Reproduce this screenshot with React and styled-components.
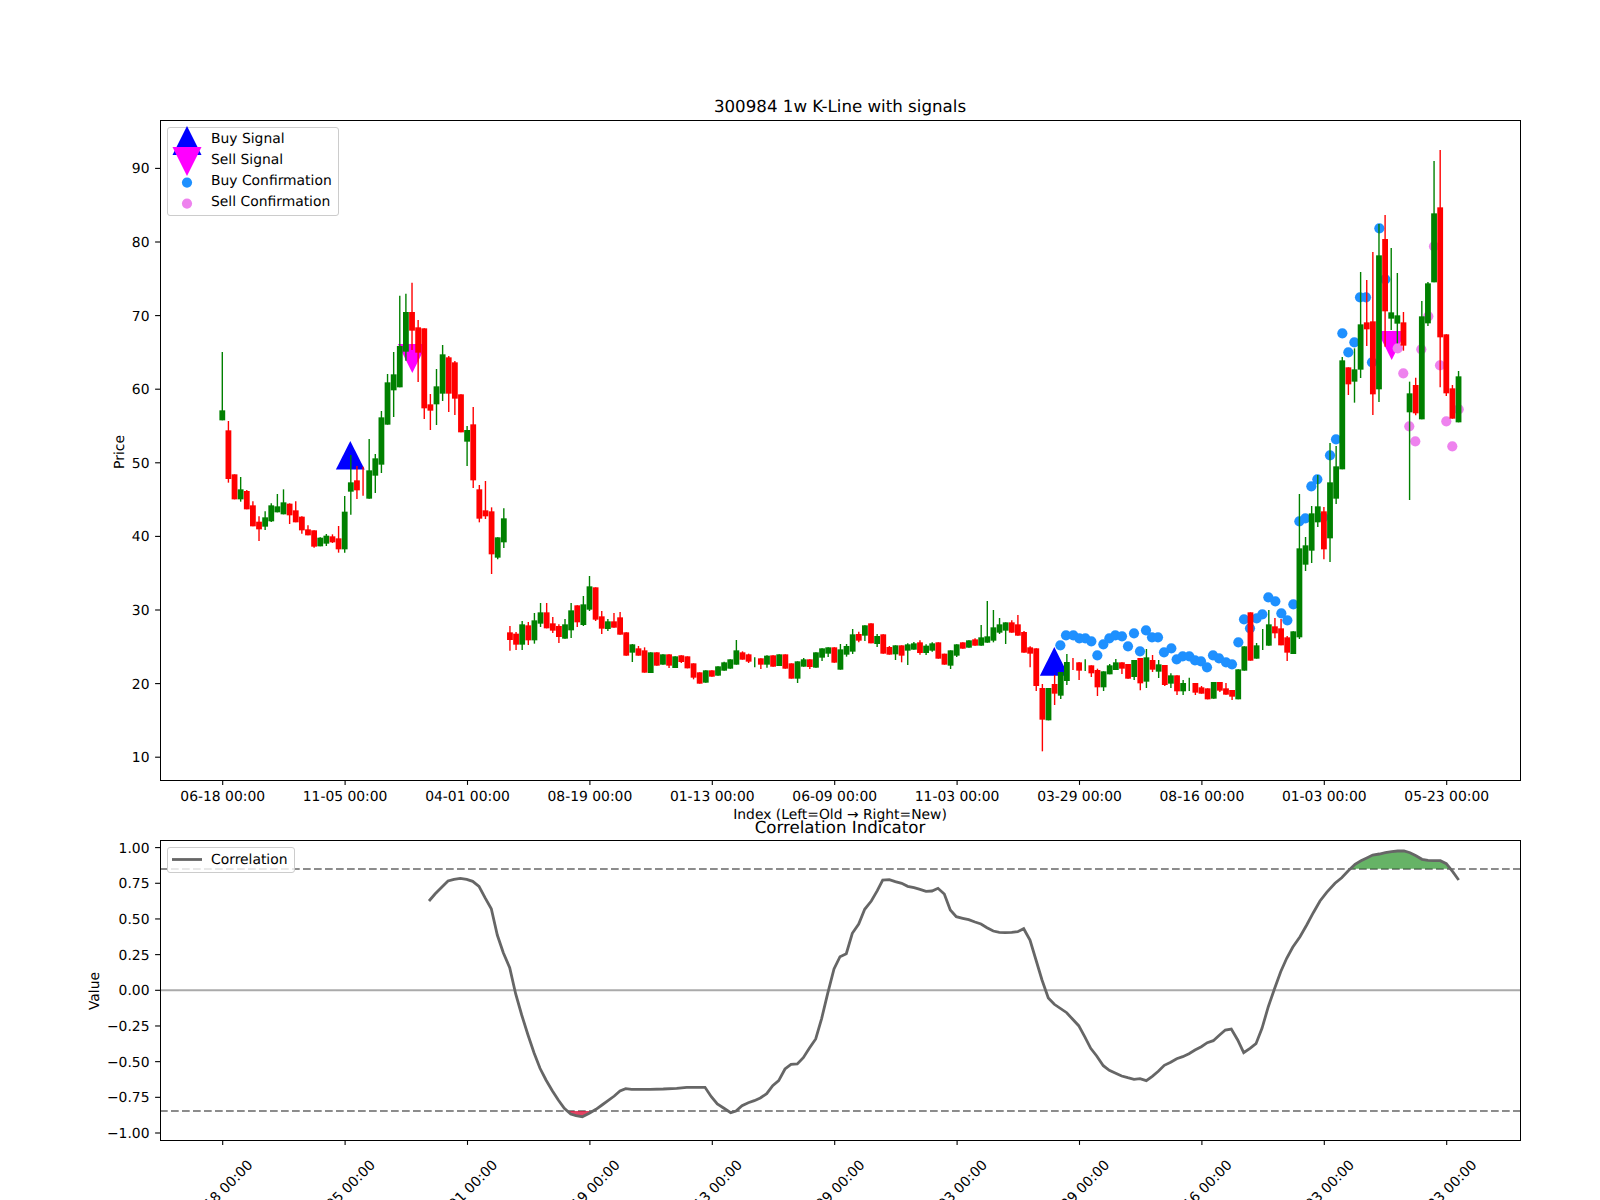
import styled, { createGlobalStyle } from 'styled-components'

const GlobalStyle = createGlobalStyle`
  html, body {
    margin: 0;
    height: 1200px;
    overflow: hidden;
    background: #fff;
    font-family: 'DejaVu Sans', sans-serif;
    color: #000;
    text-rendering: geometricPrecision;
  }
`

// everything below was read off the chart at 3x, so values are (crop px) / 3 + origin
const crop = (origin, rows) =>
  rows.map(([color, wickTop, top, bottom, wickBottom]) => ({
    color,
    wickTop: origin + wickTop / 3,
    top: origin + top / 3,
    bottom: origin + bottom / 3,
    wickBottom: origin + wickBottom / 3,
  }))

const cropPoints = (x0, y0, rows) => rows.map(([x, y]) => [x0 + x / 3, y0 + y / 3])

const candles = [
  ...crop(340, [
    ['g', 36, 211, 241, 241], ['r', 243, 271, 417, 428], ['r', 403, 403, 478, 478], ['g', 411, 448, 478, 485],
    ['r', 450, 453, 508, 508], ['r', 484, 496, 559, 559], ['r', 529, 545, 568, 603], ['g', 514, 532, 560, 570],
    ['g', 490, 496, 544, 546], ['g', 462, 499, 517, 517], ['g', 448, 487, 523, 523], ['r', 490, 491, 526, 552],
    ['r', 484, 511, 547, 547], ['r', 529, 530, 571, 581], ['r', 556, 568, 586, 586], ['r', 571, 571, 620, 623],
    ['g', 592, 593, 619, 619], ['g', 582, 587, 611, 618], ['r', 583, 589, 607, 609], ['r', 558, 595, 628, 638],
    ['g', 468, 515, 628, 638], ['g', 345, 427, 455, 524], ['r', 378, 421, 451, 477], ['r', 380, 380, 380, 467],
    ['g', 297, 391, 476, 476], ['g', 342, 355, 407, 459], ['g', 213, 232, 374, 399], ['g', 102, 127, 254, 254],
    ['g', 36, 103, 151, 231], ['g', -133, 18, 142, 142], ['g', -139, -84, 35, 62], ['r', -172, -84, -28, 30],
    ['r', -60, -38, 38, 126], ['r', -35, -35, 205, 237], ['r', 162, 193, 212, 270], ['g', 87, 139, 193, 255],
    ['g', 15, 43, 161, 183], ['r', 48, 52, 161, 216], ['r', 63, 67, 176, 225], ['r', 163, 163, 277, 277],
    ['g', 258, 270, 305, 378], ['r', 201, 253, 421, 444], ['r', 435, 448, 536, 547], ['r', 423, 511, 529, 537],
    ['r', 502, 514, 643, 702], ['g', 592, 592, 653, 658], ['g', 505, 535, 607, 624],
  ]),
  ...crop(560, [
    ['r', 198, 217, 240, 272], ['r', 216, 221, 254, 270], ['g', 183, 193, 254, 270], ['r', 186, 196, 241, 255],
    ['g', 159, 181, 241, 251], ['g', 129, 157, 191, 201], ['r', 129, 157, 205, 205], ['r', 171, 190, 212, 219],
    ['r', 193, 198, 231, 249], ['g', 177, 193, 236, 236], ['g', 129, 151, 211, 234], ['r', 136, 136, 187, 201],
    ['g', 108, 133, 195, 198], ['g', 48, 79, 149, 153], ['r', 82, 82, 179, 183], ['r', 153, 169, 206, 222],
    ['g', 177, 184, 207, 213], ['r', 159, 184, 203, 203], ['r', 156, 172, 224, 224], ['r', 217, 217, 287, 287],
    ['g', 252, 253, 278, 306], ['r', 258, 265, 287, 287], ['r', 262, 271, 338, 338], ['g', 277, 277, 339, 339],
    ['r', 277, 277, 317, 317], ['g', 283, 283, 314, 314], ['r', 283, 283, 317, 324], ['g', 289, 289, 324, 324],
    ['r', 286, 286, 306, 309], ['r', 289, 289, 325, 325], ['r', 310, 310, 353, 358], ['r', 337, 337, 371, 371],
    ['g', 331, 331, 368, 368], ['r', 331, 331, 350, 350], ['g', 319, 319, 347, 347], ['g', 305, 307, 332, 332],
    ['g', 298, 298, 326, 326], ['g', 240, 271, 314, 314], ['r', 274, 277, 299, 299], ['r', 281, 283, 305, 309],
    ['g', 292, 292, 292, 322], ['r', 295, 295, 314, 327], ['g', 286, 287, 314, 323], ['r', 286, 286, 320, 320],
    ['g', 283, 283, 318, 318],
  ]),
  ...crop(580, [
    ['r', 223, 223, 266, 266], ['r', 250, 250, 296, 296], ['g', 244, 244, 296, 309], ['g', 234, 238, 260, 260],
    ['r', 238, 238, 261, 267], ['g', 217, 217, 263, 263], ['g', 205, 205, 233, 243], ['g', 202, 202, 221, 231],
    ['r', 202, 202, 248, 248], ['g', 192, 208, 269, 269], ['g', 192, 198, 224, 230], ['g', 147, 163, 215, 222],
    ['r', 155, 162, 182, 187], ['g', 136, 136, 167, 183], ['r', 130, 130, 190, 190], ['g', 162, 168, 192, 201],
    ['r', 163, 163, 221, 221], ['r', 198, 201, 224, 224], ['g', 196, 196, 223, 240], ['r', 196, 196, 227, 247],
    ['g', 190, 193, 212, 255], ['g', 186, 190, 209, 209], ['r', 181, 187, 219, 224], ['g', 193, 197, 219, 225],
    ['g', 187, 190, 212, 215], ['r', 187, 187, 236, 236], ['r', 221, 221, 254, 254], ['g', 211, 211, 257, 267],
    ['g', 193, 193, 227, 231], ['r', 187, 187, 206, 206], ['g', 181, 181, 203, 203], ['r', 175, 178, 197, 197],
    ['g', 135, 172, 197, 197], ['g', 63, 169, 188, 188], ['g', 90, 142, 182, 187], ['g', 114, 133, 158, 162],
    ['g', 127, 127, 152, 192], ['r', 121, 127, 158, 158], ['r', 105, 133, 167, 167], ['r', 153, 156, 218, 218],
    ['r', 199, 202, 221, 262], ['r', 205, 205, 318, 333], ['r', 312, 324, 419, 514], ['g', 324, 324, 421, 421],
    ['r', 285, 312, 341, 375], ['g', 276, 276, 347, 357], ['g', 222, 246, 303, 315], ['r', 234, 234, 234, 270],
    ['r', 246, 247, 272, 300], ['g', 238, 238, 238, 273], ['r', 256, 256, 280, 291], ['r', 266, 270, 322, 348],
    ['g', 274, 274, 322, 333], ['g', 252, 256, 283, 283], ['g', 237, 247, 270, 270], ['r', 247, 247, 266, 282],
    ['r', 252, 252, 296, 296], ['g', 240, 240, 291, 300], ['r', 234, 234, 310, 331], ['g', 207, 232, 305, 324],
    ['r', 225, 240, 269, 276], ['g', 240, 253, 275, 294], ['r', 255, 255, 315, 318], ['g', 280, 286, 311, 324],
    ['r', 286, 286, 334, 345], ['g', 300, 309, 334, 345], ['g', 293, 293, 293, 333], ['r', 309, 309, 338, 345],
    ['r', 318, 322, 341, 341], ['r', 325, 325, 358, 358], ['g', 306, 306, 356, 356], ['r', 306, 306, 332, 336],
    ['r', 309, 325, 344, 344], ['r', 330, 330, 350, 360], ['g', 268, 268, 358, 358], ['g', 199, 199, 272, 272],
    ['r', 97, 97, 242, 242], ['g', 189, 196, 236, 236],
  ]),
  ...crop(380, [
    ['g', 747, 747, 747, 810], ['g', 690, 733, 797, 797], ['r', 714, 739, 760, 775], ['r', 717, 745, 796, 796],
    ['r', 768, 772, 818, 843], ['g', 754, 754, 822, 822], ['g', 342, 505, 772, 777], ['g', 471, 496, 554, 573],
    ['g', 378, 400, 512, 549], ['g', 285, 379, 427, 441], ['r', 381, 394, 508, 538], ['g', 189, 307, 475, 546],
    ['g', 198, 259, 356, 372],
  ]),
  ...crop(130, [
    ['g', 681, 691, 1018, 1018], ['r', 712, 712, 763, 795], ['g', 655, 718, 755, 818], ['g', 426, 583, 719, 744],
    ['r', 450, 577, 598, 648], ['r', 366, 574, 793, 855], ['g', 282, 376, 778, 816], ['r', 255, 327, 544, 650],
    ['g', 354, 547, 566, 600], ['g', 429, 556, 581, 640], ['r', 546, 577, 647, 662], ['g', 755, 790, 847, 1110],
    ['r', 743, 765, 850, 856], ['g', 513, 559, 868, 868], ['g', 456, 460, 580, 588], ['g', 93, 250, 457, 457],
    ['r', 60, 232, 622, 772], ['r', 613, 613, 790, 798], ['r', 765, 775, 866, 866], ['g', 723, 739, 877, 877],
  ]),
]

const buyConfirm = [
  ...cropPoints(1020, 580, [
    [121, 196], [138, 166], [160, 166], [178, 175], [196, 175], [214, 184], [232, 226], [250, 193], [268, 175],
    [286, 166], [306, 169], [324, 199], [342, 160], [360, 214], [378, 151], [396, 172], [414, 172], [432, 217],
    [454, 205], [470, 238], [488, 229], [508, 229], [525, 241], [543, 244], [561, 262], [579, 226], [597, 235],
    [618, 247], [636, 253],
  ]),
  ...cropPoints(1230, 380, [
    [25, 787], [42, 718], [60, 745], [80, 715], [97, 703], [115, 652], [136, 664], [154, 700], [172, 721],
    [190, 673], [208, 424], [226, 415], [244, 319], [262, 298], [280, 412], [300, 226], [318, 178],
  ]),
  ...cropPoints(1230, 130, [
    [337, 610], [355, 667], [373, 637], [390, 502], [408, 502], [426, 697], [448, 295], [466, 448],
  ]),
]

const sellConfirm = [
  [1397.7, 348.3], [1403.3, 373.3], [1409.3, 426.3], [1415.3, 441.3], [1421.3, 349.3], [1428.3, 316.3],
  [1434, 246.3], [1440, 365.3], [1446.3, 421.3], [1452.3, 446.3], [1458.7, 409.3],
]

const correlation = [
  ...cropPoints(80, 770, [
    [1047, 393], [1065, 372], [1085, 352], [1104, 333], [1122, 328], [1141, 325], [1160, 328], [1178, 334],
    [1197, 349], [1215, 383], [1234, 416], [1252, 495], [1270, 548], [1289, 593], [1307, 672], [1325, 735],
    [1344, 795], [1362, 848], [1380, 895], [1398, 930], [1417, 962], [1435, 990], [1453, 1015], [1472, 1032],
  ]),
  ...cropPoints(570, 830, [
    [18, 857], [37, 860], [58, 850], [78, 838], [96, 825], [114, 812], [133, 798], [150, 783], [167, 776],
    [185, 778], [203, 778], [240, 778], [280, 777], [320, 775], [350, 772], [405, 772], [424, 800], [442, 822],
    [462, 835], [482, 848], [498, 843], [516, 827], [535, 818], [553, 812], [571, 804], [590, 791], [608, 767],
    [626, 752], [645, 717], [663, 703], [682, 702], [700, 683], [718, 655], [737, 627], [755, 565], [773, 490],
    [792, 417], [810, 380], [829, 371], [847, 310], [866, 282], [884, 238], [904, 213], [922, 182], [938, 150],
    [958, 149], [976, 155], [995, 160], [1013, 169], [1032, 173], [1050, 178], [1068, 184], [1086, 183],
    [1104, 175], [1123, 192], [1141, 240], [1159, 260], [1178, 265], [1196, 269], [1215, 276], [1233, 282],
    [1251, 293], [1270, 303], [1288, 307], [1306, 308], [1325, 307], [1343, 305], [1361, 296], [1380, 330],
    [1398, 390], [1416, 450], [1435, 504], [1453, 523],
  ]),
  ...cropPoints(1060, 830, [
    [20, 548], [38, 568], [56, 587], [74, 620], [92, 655], [110, 678], [130, 707], [148, 721], [167, 730],
    [185, 738], [203, 743], [222, 748], [240, 746], [259, 752], [277, 739], [295, 724], [313, 706], [332, 697],
    [350, 686], [368, 680], [387, 671], [405, 660], [424, 650], [442, 638], [460, 632], [478, 616], [496, 600],
    [514, 597], [533, 630], [551, 668], [570, 655], [588, 641], [606, 595], [625, 530], [644, 475], [662, 425],
    [680, 385], [698, 352], [720, 320], [740, 285], [760, 248], [780, 213], [800, 187], [825, 160], [845, 143],
    [865, 122], [885, 103], [903, 92], [922, 83], [938, 75], [958, 72], [976, 68], [995, 65], [1013, 63],
    [1032, 63], [1050, 68], [1068, 77], [1086, 88], [1104, 91], [1123, 92], [1141, 92], [1159, 101], [1178, 125],
    [1196, 150],
  ]),
]

const oversold = [
  [566.7, 1111], [570.7, 1114], [576, 1115.7], [582.3, 1116.7], [589.3, 1113.3], [590, 1111],
]
const overbought = cropPoints(1060, 830, [
  [875, 116], [885, 103], [903, 92], [922, 83], [938, 75], [958, 72], [976, 68], [995, 65], [1013, 63],
  [1032, 63], [1050, 68], [1068, 77], [1086, 88], [1104, 91], [1123, 92], [1141, 92], [1159, 101], [1168, 116],
])

const xAt = (i) => 222.7 + 6.12 * i
const priceY = (p) => 168.4 + (90 - p) * 7.36
const valueY = (v) => 990.3 - v * 142.7

const dates = [
  '06-18 00:00', '11-05 00:00', '04-01 00:00', '08-19 00:00', '01-13 00:00', '06-09 00:00',
  '11-03 00:00', '03-29 00:00', '08-16 00:00', '01-03 00:00', '05-23 00:00',
]
const prices = [10, 20, 30, 40, 50, 60, 70, 80, 90]
const values = [1, 0.75, 0.5, 0.25, 0, -0.25, -0.5, -0.75, -1]

const COLORS = { g: '#008000', r: '#ff0000' }

const Figure = styled.div`
  box-sizing: border-box;
  width: 1600px;
  height: 1200px;
  padding: 0 80px 0 160px;
  display: flex;
  flex-direction: column;
`

const Title = styled.h2`
  margin: 0;
  height: ${(p) => p.$height}px;
  display: flex;
  align-items: flex-end;
  justify-content: center;
  font-size: 16.67px;
  font-weight: 400;
  line-height: 20px;
  padding-bottom: ${(p) => p.$gap}px;
  box-sizing: border-box;
`

const XLabel = styled.div`
  height: 16px;
  margin: 27px 0 -9px;
  text-align: center;
  font-size: 13.89px;
  line-height: 16px;
`

const Plot = styled.div`
  position: relative;
  height: ${(p) => p.$height}px;

  &::after {
    content: '';
    position: absolute;
    inset: 0 -1px -1px 0;
    border: 1px solid #000;
    pointer-events: none;
  }
`

const Canvas = styled.svg`
  display: block;
  width: 100%;
  height: 100%;
  overflow: visible;
`

const Legend = styled.div`
  position: absolute;
  z-index: 1;
  top: 7px;
  left: 7px;
  box-sizing: border-box;
  width: ${(p) => p.$width}px;
  padding: ${(p) => p.$pad};
  background: rgba(255, 255, 255, 0.8);
  border: 1px solid #ccc;
  border-radius: 3px;
  font-size: 13.89px;
`

const LegendRow = styled.div`
  display: flex;
  align-items: center;
  height: 21px;
  gap: 9px;
  padding-left: 4px;
  white-space: nowrap;
`

const LegendMark = styled.svg`
  flex: none;
  width: 30px;
  height: 21px;
  overflow: visible;
`

const Label = styled.text`
  font-size: 13.89px;
  fill: #000;
  text-anchor: ${(p) => p.$anchor || 'middle'};
`

const Ticks = ({ y }) =>
  dates.map((_, n) => <line key={n} x1={xAt(n * 20)} x2={xAt(n * 20)} y1={y} y2={y + 4.9} stroke="#000" strokeWidth="1.1" />)

const YTick = ({ y, children }) => (
  <g>
    <line x1="155.1" x2="160" y1={y} y2={y} stroke="#000" strokeWidth="1.1" />
    <Label $anchor="end" x="149.5" y={y + 5}>{children}</Label>
  </g>
)

const formatValue = (v) => (v < 0 ? '\u2212' : '') + Math.abs(v).toFixed(2)
const pointString = (pts) => pts.map(([x, y]) => `${x.toFixed(1)},${y.toFixed(1)}`).join(' ')

const upTriangle = (cx, top, bottom) => `${cx - 14.4},${bottom} ${cx + 14.4},${bottom} ${cx},${top}`

function Candle({ i, candle }) {
  const x = xAt(i) - 0.4
  const fill = COLORS[candle.color]
  return (
    <g>
      <line x1={x} x2={x} y1={candle.wickTop} y2={candle.wickBottom} stroke={fill} strokeWidth="1.4" />
      {candle.bottom > candle.top && (
        <rect x={x - 2.9} y={candle.top} width="5.8" height={candle.bottom - candle.top} fill={fill} />
      )}
    </g>
  )
}

function PriceChart() {
  return (
    <Plot $height={660}>
      <Canvas viewBox="160 120 1360 660">
        <polygon points={upTriangle(350.3, 441, 469.5)} fill="#0000ff" />
        <polygon points={upTriangle(1054.3, 647, 675.7)} fill="#0000ff" />
        <polygon points={upTriangle(412.3, 373, 344)} fill="#ff00ff" />
        <polygon points={upTriangle(1391.7, 360, 331)} fill="#ff00ff" />
        {sellConfirm.map(([x, y]) => <circle key={x} cx={x} cy={y} r="5.1" fill="#ee82ee" />)}
        {buyConfirm.map(([x, y]) => <circle key={x} cx={x} cy={y} r="5.1" fill="#1e90ff" />)}
        {candles.map((c, i) => <Candle key={i} i={i} candle={c} />)}
        <Ticks y={780} />
        {dates.map((d, n) => <Label key={d} x={xAt(n * 20)} y="801">{d}</Label>)}
        {prices.map((p) => <YTick key={p} y={priceY(p)}>{p}</YTick>)}
        <Label transform="translate(124 452) rotate(-90)">Price</Label>
      </Canvas>
      <Legend $width={171.5} $pad="0 0 2.5px">
        <LegendRow>
          <LegendMark viewBox="0 0 30 21"><polygon points="15,-2 29.5,27 0.5,27" fill="#0000ff" /></LegendMark>
          Buy Signal
        </LegendRow>
        <LegendRow>
          <LegendMark viewBox="0 0 30 21"><polygon points="0.5,-2 29.5,-2 15,27" fill="#ff00ff" /></LegendMark>
          Sell Signal
        </LegendRow>
        <LegendRow>
          <LegendMark viewBox="0 0 30 21"><circle cx="15" cy="12.6" r="5.1" fill="#1e90ff" /></LegendMark>
          Buy Confirmation
        </LegendRow>
        <LegendRow>
          <LegendMark viewBox="0 0 30 21"><circle cx="15" cy="12.6" r="5.1" fill="#ee82ee" /></LegendMark>
          Sell Confirmation
        </LegendRow>
      </Legend>
    </Plot>
  )
}

function CorrelationChart() {
  return (
    <Plot $height={300}>
      <Canvas viewBox="160 840 1360 300">
        <line x1="160" x2="1520" y1="990.3" y2="990.3" stroke="#aaa" strokeWidth="2" />
        <line x1="160" x2="1520" y1="869" y2="869" stroke="#8c8c8c" strokeWidth="2.1" strokeDasharray="7.7 3.3" />
        <line x1="160" x2="1520" y1="1111" y2="1111" stroke="#8c8c8c" strokeWidth="2.1" strokeDasharray="7.7 3.3" />
        <polygon points={pointString(overbought)} fill="#008000" fillOpacity="0.6" />
        <polygon points={pointString(oversold)} fill="#dc143c" fillOpacity="0.8" />
        <polyline points={pointString(correlation)} fill="none" stroke="#666" strokeWidth="2.8" />
        <Ticks y={1140} />
        {dates.map((d, n) => (
          <Label key={d} dominantBaseline="central" transform={`translate(${xAt(n * 20) - 2} 1193) rotate(-45)`}>{d}</Label>
        ))}
        {values.map((v) => <YTick key={v} y={valueY(v)}>{formatValue(v)}</YTick>)}
        <Label transform="translate(99 991) rotate(-90)">Value</Label>
      </Canvas>
      <Legend $width={127.5} $pad="1px 0 2px">
        <LegendRow>
          <LegendMark viewBox="0 0 30 21"><line x1="0" x2="30" y1="10.5" y2="10.5" stroke="#666" strokeWidth="2.8" /></LegendMark>
          Correlation
        </LegendRow>
      </Legend>
    </Plot>
  )
}

export default function App() {
  return (
    <>
      <GlobalStyle />
      <Figure>
        <Title $height={120} $gap={3}>300984 1w K-Line with signals</Title>
        <PriceChart />
        <XLabel>Index (Left=Old → Right=New)</XLabel>
        <Title $height={26} $gap={2}>Correlation Indicator</Title>
        <CorrelationChart />
      </Figure>
    </>
  )
}
